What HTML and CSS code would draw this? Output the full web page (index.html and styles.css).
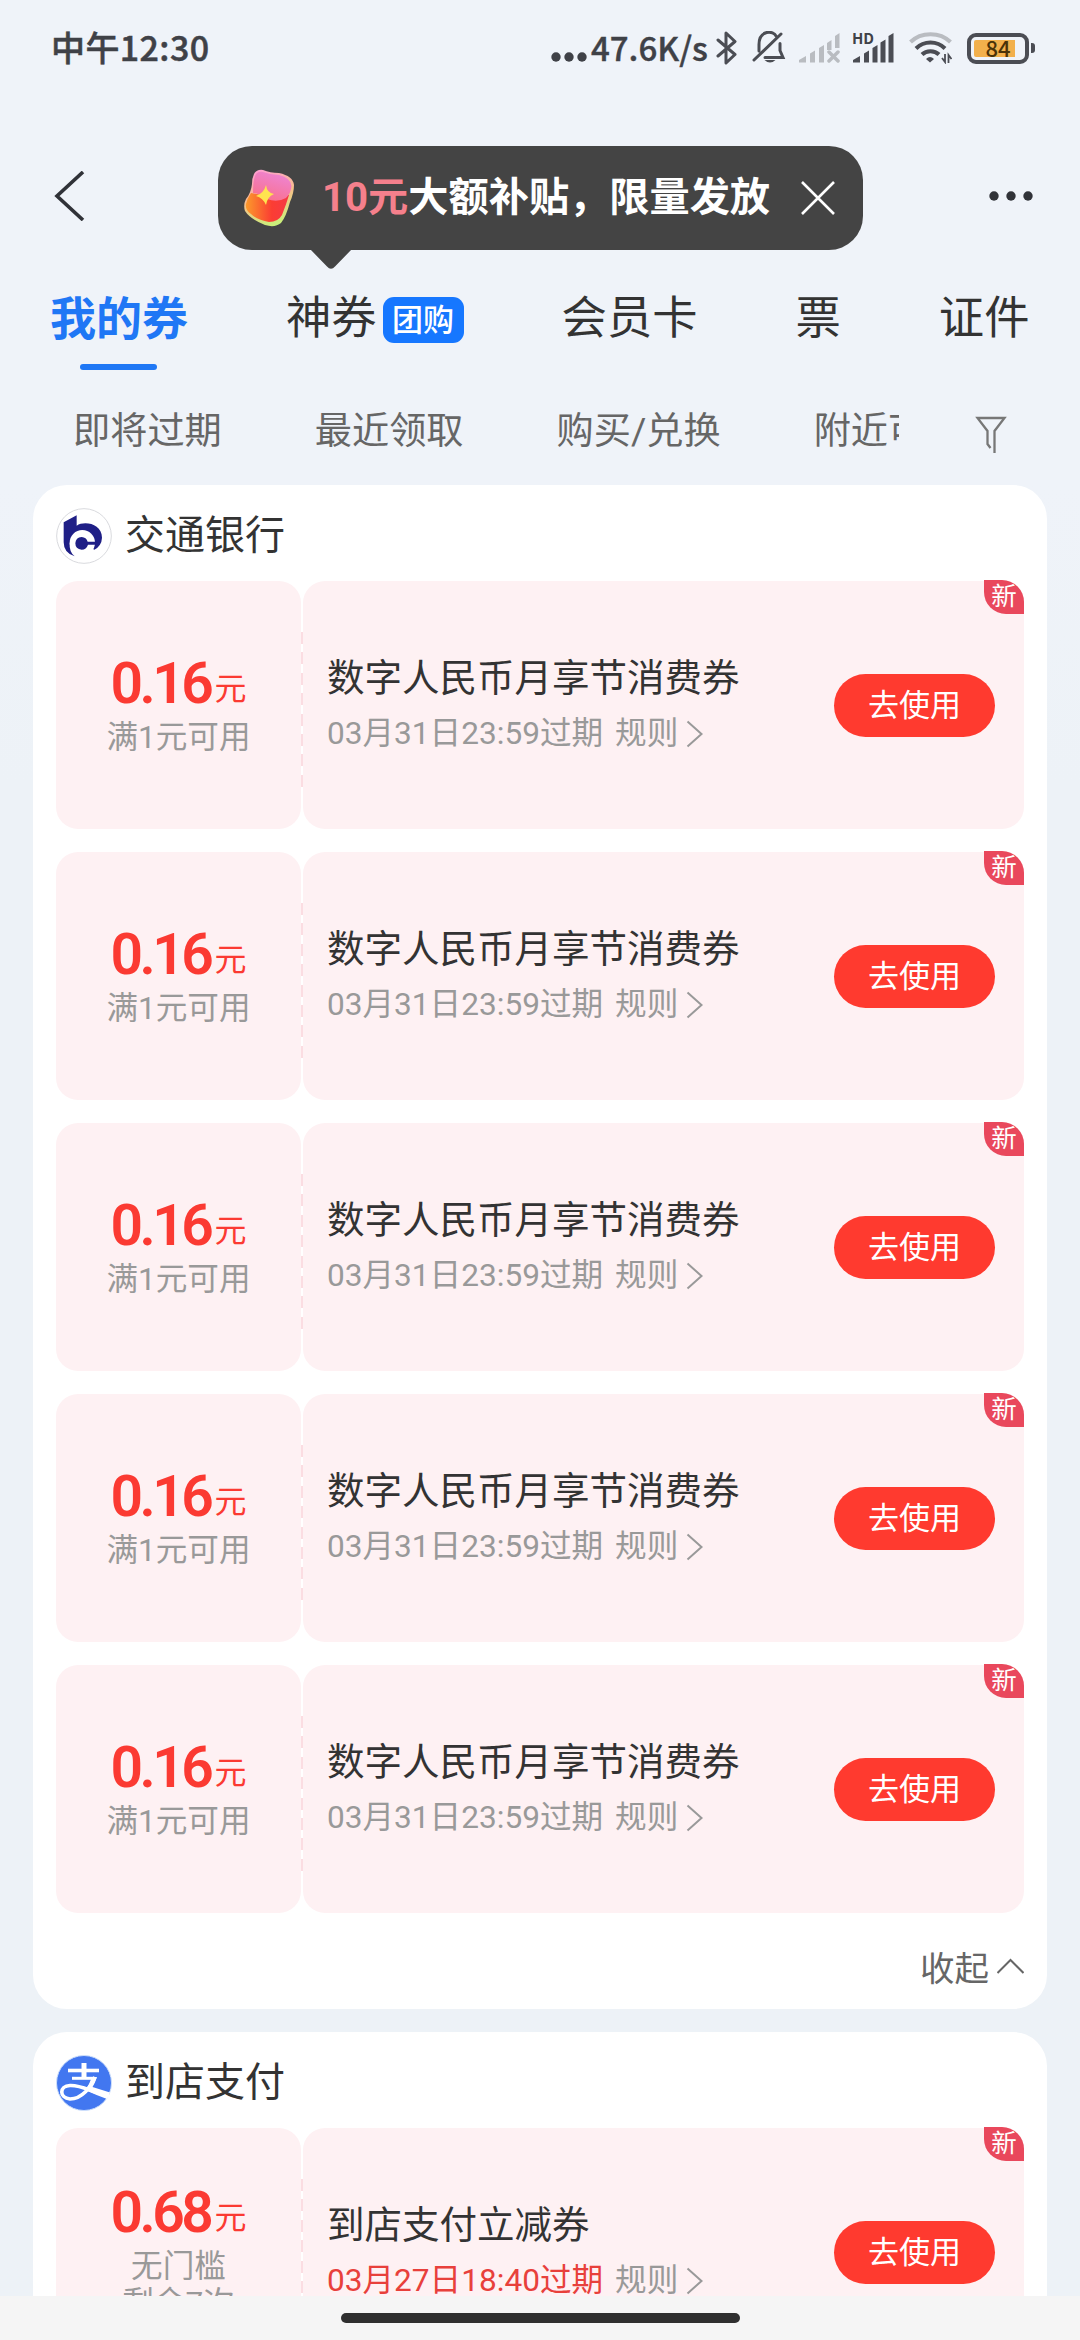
FILE: index.html
```html
<!DOCTYPE html>
<html lang="zh-CN">
<head>
<meta charset="utf-8">
<title>我的券</title>
<link rel="stylesheet" href="styles.css">
</head>
<body>
<svg class="defs" width="0" height="0">
  <symbol id="chevron" viewBox="0 0 18 28"><path d="M1.5 1.5 15.500 14 1.500 26.500" fill="none" stroke="currentColor" stroke-width="2"/></symbol>
</svg>
<div class="page">
  <header class="status">
    <span class="time">中午12:30</span>
    <div class="status-right">
      <svg class="dots" width="36" height="10" viewBox="0 0 36 10" fill="#3f4147"><circle cx="5" cy="5" r="4.700"/><circle cx="18" cy="5" r="4.700"/><circle cx="31" cy="5" r="4.700"/></svg>
      <span class="speed">47.6K/s</span>
      <svg class="bt" width="22" height="34" viewBox="0 0 22 34" fill="none" stroke="#4b4d54" stroke-width="3" stroke-linejoin="round" stroke-linecap="round"><path d="M2 9 19 23.500 10 32V2L19 10.500 2 25"/></svg>
      <svg class="bell" width="34" height="33" viewBox="0 0 34 33" fill="none" stroke="#4b4d54" stroke-width="3" stroke-linecap="round"><path d="M7 20V13.500C7 -1.500 22 -.5 24 5M28 12.500V19.500L31 26.500H13M2 29 29 3"/><path d="M12.500 29h11q-5.500 5-11 0z" fill="#4b4d54" stroke="none"/></svg>
      <svg class="sig1" width="41" height="30" viewBox="0 0 41 30" fill="#b9bcc1"><path d="M0 29.500V27l7-4v6.500zM11 20.500l5-3v12h-5zM20 15l5-3v17.500h-5zM28 10l4.500-3v10H28zM36 3l4.500-3v15H36z"/><path d="m30 19 9 9m0-9-9 9" stroke="#b9bcc1" stroke-width="3.500" stroke-linecap="round"/></svg>
      <div class="hd"><span class="hd-label">HD</span><svg width="41" height="30" viewBox="0 0 41 30" fill="#4b4d54"><path d="M0 29.500V27l7-4v6.500zM11 20.500l5-3v12h-5zM19.500 15l5-3v17.500h-5zM27.500 9.500l5-3v23h-5zM35.500 3l5-3v29.500h-5z"/></svg></div>
      <svg class="wifi" width="43" height="33" viewBox="0 0 43 33" fill="none" stroke="#4b4d54" stroke-width="4"><path d="M1.500 11C12 .5 31 .5 41.500 11" stroke="#b9bcc1"/><path d="M7 17.500c8-8 21-8 29 0M13 23.500c4.500-4.500 12.500-4.500 17 0"/><path d="M21 31.500 17 28q4-4 8 0z" fill="#4b4d54" stroke="none"/><path d="M36 23v8l-3-4M39.500 32v-8l3 4" stroke-width="1.800"/></svg>
      <div class="battery"><span class="battery-level">84</span></div><i class="nub"></i>
    </div>
  </header>

  <nav class="nav">
    <svg class="back" width="32" height="50" viewBox="0 0 32 50" fill="none" stroke="#303238" stroke-width="3.600"><path d="M29 1 3 25 29 49"/></svg>
    <div class="tip">
      <svg class="gift" width="52" height="58" viewBox="0 0 52 58">
        <defs>
          <linearGradient id="g1" x1=".7" y1="0" x2=".3" y2="1"><stop offset="0" stop-color="#ee85d5"/><stop offset="1" stop-color="#f9708c"/></linearGradient>
          <linearGradient id="g2" x1="0" y1=".5" x2="1" y2=".5"><stop offset="0" stop-color="#fb9a2b"/><stop offset=".6" stop-color="#fb3d33"/><stop offset="1" stop-color="#f53945"/></linearGradient>
          <linearGradient id="g3" x1=".3" y1="0" x2=".6" y2="1"><stop offset="0" stop-color="#ff9fd0"/><stop offset=".5" stop-color="#f6c089"/><stop offset="1" stop-color="#c8f27a"/></linearGradient>
        </defs>
        <path d="M11 5Q14 0 20 1 27 4 36 4 50 7 51 16 51 24 47 33 43 48 38 54 32 59 22 56 7 50 2 42 0 36 3 30 8 24 9 15 9 9 11 5Z" fill="url(#g3)"/>
        <path d="M3 35Q4 30 8 24L24 27 46 26Q43 36 39 46 35 53 26 53 14 51 8 45 2 41 3 35Z" fill="url(#g2)"/>
        <path d="M12 7Q14 2 20 3 28 6 36 6 48 9 48.500 17 48 24 43 29 34 34 24 30 15 24 10 24 10 12 12 7Z" fill="url(#g1)"/>
        <path d="M23 16Q24 24 31 25 24 28 23 36 20 29 13 27 21 24 23 16Z" fill="#ffe34f"/>
      </svg>
      <p class="tip-text"><em>10元</em>大额补贴，限量发放</p>
      <svg class="close" width="34" height="34" viewBox="0 0 34 34" fill="none" stroke="#fff" stroke-width="2.600"><path d="m1 1 32 32M33 1 1 33"/></svg>
      <svg class="tip-arrow" width="44" height="21" viewBox="0 0 44 21" fill="#444"><path d="M1 0H43L26 17.500Q22 22 18 17.500Z"/></svg>
    </div>
    <svg class="more" width="46" height="12" viewBox="0 0 46 12" fill="#303238"><circle cx="6" cy="6" r="4.700"/><circle cx="23" cy="6" r="4.700"/><circle cx="40" cy="6" r="4.700"/></svg>
  </nav>

  <div class="tabs">
    <span class="tab active">我的券</span>
    <span class="tab">神券<b class="tag">团购</b></span>
    <span class="tab">会员卡</span>
    <span class="tab">票</span>
    <span class="tab">证件</span>
  </div>

  <div class="filters">
    <div class="filter-list"><span>即将过期</span><span>最近领取</span><span>购买/兑换</span><span>附近可用</span></div>
    <svg class="funnel" width="32" height="38" viewBox="0 0 32 38" fill="none" stroke="#777" stroke-width="2.300"><path d="M19.500 37V15L29.500 2H2.500L12.500 15V28L15.500 32"/></svg>
  </div>

  <main class="list">
    <section class="card">
      <div class="card-head">
        <svg class="logo" width="56" height="56" viewBox="19 9 168 168">
          <circle cx="103" cy="93" r="82" fill="#fff" stroke="#d9dade" stroke-width="3"/>
          <path d="M42 52 81 31V62C104 46 157 56 157 98Q156 122 134 134L98 113H60Q58 140 75 154 42 144 42 112Z" fill="#1f1f86"/>
          <circle cx="98" cy="113" r="38" fill="#fff"/>
          <path d="M96 96Q110 97 114 110H141V119H115Q110 134 96 134 77 132 77 115 78 97 96 96Z" fill="#1f1f86"/>
        </svg>
        <h2>交通银行</h2>
      </div>
      <div class="coupons">
        <article class="coupon"><div class="amount"><p class="price">0.16<small>元</small></p><p>满1元可用</p></div><div class="detail"><div class="info"><h3>数字人民币月享节消费券</h3><p class="meta"><span>03月31日23:59过期</span><span class="rule">规则</span><svg width="18" height="28"><use href="#chevron"/></svg></p></div><button class="use">去使用</button><span class="new">新</span></div></article>
        <article class="coupon"><div class="amount"><p class="price">0.16<small>元</small></p><p>满1元可用</p></div><div class="detail"><div class="info"><h3>数字人民币月享节消费券</h3><p class="meta"><span>03月31日23:59过期</span><span class="rule">规则</span><svg width="18" height="28"><use href="#chevron"/></svg></p></div><button class="use">去使用</button><span class="new">新</span></div></article>
        <article class="coupon"><div class="amount"><p class="price">0.16<small>元</small></p><p>满1元可用</p></div><div class="detail"><div class="info"><h3>数字人民币月享节消费券</h3><p class="meta"><span>03月31日23:59过期</span><span class="rule">规则</span><svg width="18" height="28"><use href="#chevron"/></svg></p></div><button class="use">去使用</button><span class="new">新</span></div></article>
        <article class="coupon"><div class="amount"><p class="price">0.16<small>元</small></p><p>满1元可用</p></div><div class="detail"><div class="info"><h3>数字人民币月享节消费券</h3><p class="meta"><span>03月31日23:59过期</span><span class="rule">规则</span><svg width="18" height="28"><use href="#chevron"/></svg></p></div><button class="use">去使用</button><span class="new">新</span></div></article>
        <article class="coupon"><div class="amount"><p class="price">0.16<small>元</small></p><p>满1元可用</p></div><div class="detail"><div class="info"><h3>数字人民币月享节消费券</h3><p class="meta"><span>03月31日23:59过期</span><span class="rule">规则</span><svg width="18" height="28"><use href="#chevron"/></svg></p></div><button class="use">去使用</button><span class="new">新</span></div></article>
      </div>
      <div class="fold"><span>收起</span><svg width="27" height="16" viewBox="0 0 27 16" fill="none" stroke="#666" stroke-width="2"><path d="M.5 15 13.500 2 26.500 15"/></svg></div>
    </section>

    <section class="card">
      <div class="card-head">
        <svg class="logo" width="56" height="56" viewBox="0 0 56 56">
          <circle cx="28" cy="28" r="27.500" fill="#4277f0" stroke="#cfe0fb"/>
          <g fill="none" stroke="#fff"><path d="M28 8V22" stroke-width="5"/><path d="M12 15.500H43" stroke-width="3.600"/><path d="M16 23.300H38" stroke-width="3"/><path d="M39 22C35 32 26 44 14 44 3 43 3 31 14 30.500 27 30 34 37 53 41" stroke-width="3.600"/></g>
          <path d="M35.500 22H41Q39 28 36.500 32L54 37.500 51 44Q40 40 29 35Q34 29 35.500 22Z" fill="#fff"/>
        </svg>
        <h2>到店支付</h2>
      </div>
      <div class="coupons">
        <article class="coupon urgent"><div class="amount"><p class="price">0.68<small>元</small></p><p>无门槛</p><p>剩余7次</p></div><div class="detail"><div class="info"><h3>到店支付立减券</h3><p class="meta"><span>03月27日18:40过期</span><span class="rule">规则</span><svg width="18" height="28"><use href="#chevron"/></svg></p></div><button class="use">去使用</button><span class="new">新</span></div></article>
      </div>
    </section>
  </main>

  <footer class="home"><i></i></footer>
</div>
</body>
</html>
```
FILE: styles.css
```css
* { box-sizing: border-box; margin: 0; padding: 0; }
body { width: 1080px; height: 2340px; overflow: hidden; background: #eff3f9; color: #333; font-family: Roboto, "Noto Sans CJK SC", sans-serif; }
svg { display: block; flex: none; }
i, em { font-style: normal; }
.defs { position: absolute; }
.page { display: flex; flex-direction: column; height: 2340px; overflow: hidden; }

.status { flex: none; display: flex; justify-content: space-between; height: 98px; padding: 0 45px 0 51px; color: #3f4147; font-family: "Noto Sans CJK SC", sans-serif; font-weight: 500; }
.time { font-size: 34px; line-height: 94px; letter-spacing: .4px; -webkit-text-stroke: .5px; }
.status-right { display: flex; align-items: flex-start; }
.dots { margin: 52px 4px 0 0; }
.speed { width: 122px; font-size: 33px; line-height: 94px; white-space: nowrap; -webkit-text-stroke: .4px; }
.bt { margin: 31px 14px 0 3px; }
.bell { margin: 31px 13px 0 0; }
.sig1 { margin: 33px 13px 0 0; }
.hd { position: relative; margin: 33px 15px 0 0; }
.hd-label { position: absolute; left: -1px; top: -3px; font-size: 15px; line-height: 16px; font-weight: 700; }
.wifi { margin: 31px 15px 0 0; }
.battery { width: 62px; height: 31px; margin-top: 33px; padding: 3px; border: 4px solid #4b4d54; border-radius: 9px; background: linear-gradient(90deg, #f2b04c 41px, transparent 41px) content-box; }
.battery-level { display: block; width: 48px; text-align: center; font-size: 22px; line-height: 14px; color: #4a3208; }
.nub { width: 4px; height: 10px; margin: 43px 0 0 2px; border-radius: 0 3px 3px 0; background: #4b4d54; }

.nav { flex: none; display: flex; justify-content: space-between; align-items: center; height: 152px; padding: 48px 46px 0 54px; }
.back, .more { margin-bottom: 5px; }
.tip { position: relative; display: flex; align-items: center; width: 645px; height: 104px; margin-left: 7px; padding: 0 28px 0 25px; border-radius: 34px; background: #444; }
.tip-text { flex: 1; margin-left: 27px; color: #fff; font-size: 40.2px; line-height: 60px; font-weight: 700; white-space: nowrap; }
.tip-text em { color: #f5808c; }
.tip-arrow { position: absolute; left: 91px; top: 103px; }

.tabs { flex: none; display: flex; gap: 98px; height: 120px; padding-left: 50px; align-items: flex-start; }
.tab { display: flex; align-items: center; height: 120px; padding-top: 17px; font-size: 45.300px; line-height: 66px; white-space: nowrap; }
.tab.active { position: relative; color: #1f77f5; font-size: 46px; font-weight: 700; }
.tab.active::after { content: ""; position: absolute; left: 30px; bottom: 0; width: 77px; height: 6px; border-radius: 3px; background: #1f77f5; }
.tag { width: 81px; height: 46px; margin: 2px 0 0 6px; border-radius: 11px; background: #1677ff; color: #fff; font-size: 31px; line-height: 47px; font-weight: 500; text-align: center; }

.filters { flex: none; display: flex; align-items: flex-start; height: 115px; color: #666; }
.filter-list { display: flex; gap: 93px; width: 899px; padding: 31px 0 0 73px; overflow: hidden; font-size: 37.200px; line-height: 60px; white-space: nowrap; }
.funnel { margin: 46px 0 0 76px; }

.list { flex: 1; min-height: 0; display: flex; flex-direction: column; gap: 23px; padding: 0 33px; overflow: hidden; background: linear-gradient(#eff3f9, #edf2f7 300px); }
.card { flex: none; padding: 23px 23px 0; border-radius: 34px; background: #fff; }
.card-head { display: flex; gap: 13px; height: 73px; }
.card-head h2 { font-size: 40px; line-height: 56px; font-weight: 400; }
.coupons { display: flex; flex-direction: column; gap: 23px; }
.coupon { position: relative; display: flex; gap: 2px; height: 248px; }
.coupon::after { content: ""; position: absolute; left: 244.500px; top: 51px; width: 2px; height: 155px; background: repeating-linear-gradient(#fbdde2 0 12px, transparent 12px 20.400px); }
.amount { display: flex; flex-direction: column; justify-content: center; align-items: center; width: 245px; border-radius: 22px; background: #fef1f3; color: #999; font-size: 31.600px; line-height: 37px; }
.price { height: 65px; color: #fb3a32; font-size: 57px; line-height: 60px; font-weight: 600; letter-spacing: -3.500px; white-space: nowrap; }
.price small { position: relative; top: -3px; margin-left: 4px; font-size: 32px; font-weight: 400; letter-spacing: 0; }
.detail { position: relative; flex: 1; display: flex; align-items: center; justify-content: space-between; padding: 0 29px 0 24px; border-radius: 22px; background: #fef1f3; }
.info h3 { font-size: 37.500px; line-height: 56px; font-weight: 400; white-space: nowrap; }
.meta { display: flex; align-items: center; height: 54px; padding-top: 2px; color: #999; font-size: 31.600px; line-height: 54px; white-space: nowrap; }
.rule { margin: 0 8px 0 12px; }
.use { width: 161px; height: 63px; border: 0; border-radius: 32px; background: #ff3a2f; color: #fff; font: 31px/63px Roboto, "Noto Sans CJK SC", sans-serif; }
.new { position: absolute; right: 0; top: -1px; width: 40px; height: 34px; border-radius: 0 22px 0 22px; background: #e9485c; color: #fff; font-size: 25.500px; line-height: 33px; text-align: center; }
.urgent .meta span:first-child { color: #e8403b; }
.fold { display: flex; align-items: center; justify-content: flex-end; gap: 8px; height: 96px; padding-top: 10px; color: #666; font-size: 34.500px; }

.home { flex: none; display: flex; justify-content: center; height: 44px; padding-top: 17px; background: #f5f5f5; }
.home i { width: 399px; height: 10px; border-radius: 5px; background: #2f2f2f; }
```
